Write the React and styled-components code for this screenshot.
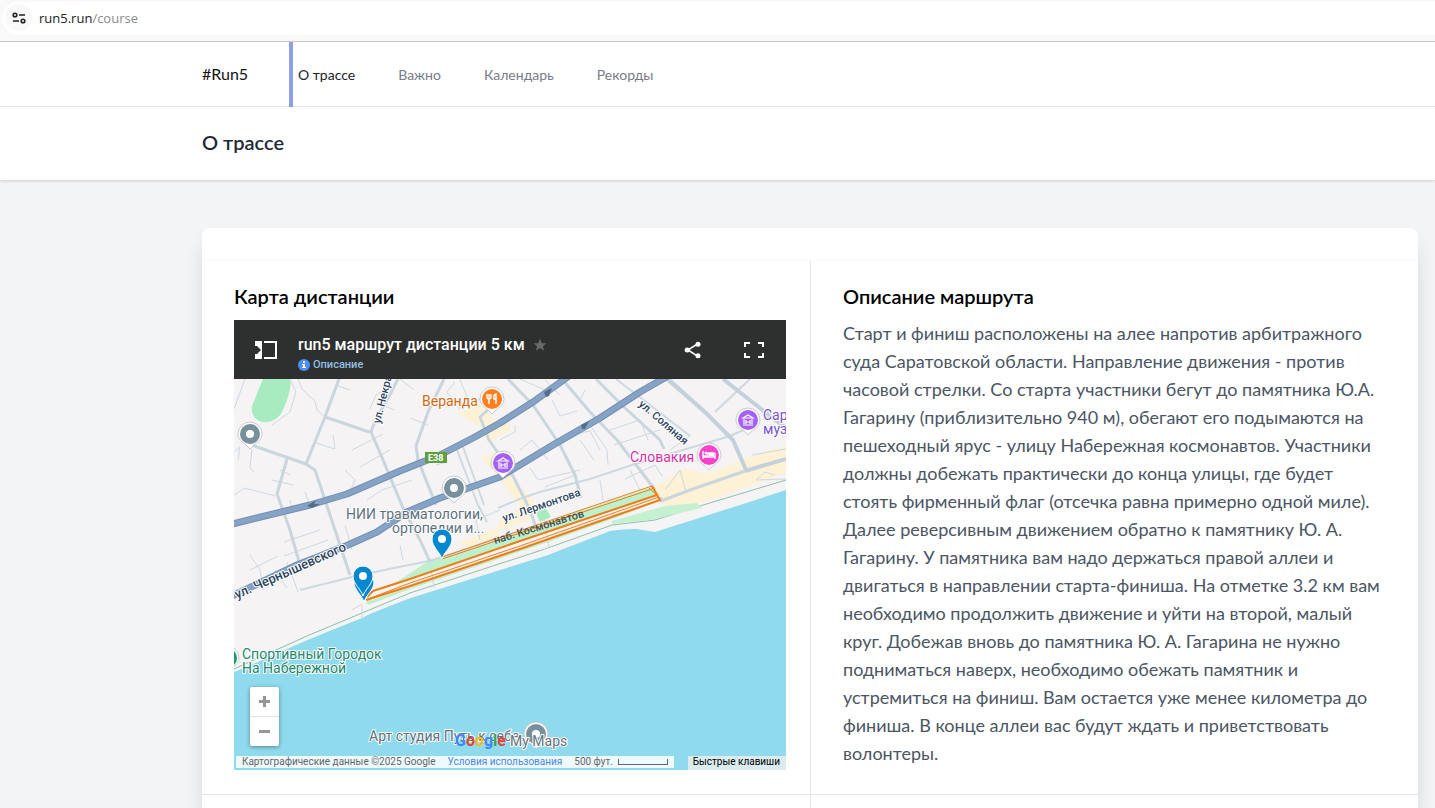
import React from "react";
import styled, { createGlobalStyle } from "styled-components";

const sans = `Lato, "Open Sans", "Noto Sans", sans-serif`;

const GlobalStyle = createGlobalStyle`
  * { box-sizing: border-box; }
  body { margin: 0; background: #f3f4f6; font-family: ${sans}; color: #000; }
  h1, h2, p { margin: 0; }
  button { font: inherit; border: 0; background: none; padding: 0; cursor: pointer; }
`;

const Page = styled.div`
  display: flex;
  flex-direction: column;
  min-height: 100vh;
`;

const BrowserBar = styled.div`
  display: flex;
  height: 42px;
  padding: 2px 0 6px 2px;
  background: #f9f9fa;
  border-bottom: 1px solid #c5c5c5;
`;

const Address = styled.div`
  flex: 1;
  display: flex;
  align-items: center;
  gap: 7px;
  padding: 0 0 2px 3px;
  background: #fff;
  border-radius: 17px 0 0 17px;
  color: #8a8a8a;
  font: 13px "Open Sans", "Noto Sans", sans-serif;
  b { font-weight: 400; color: #202124; }
`;

const SiteButton = styled.button`
  display: grid;
  place-items: center;
  width: 27px;
  height: 27px;
  border-radius: 50%;
  background: #f9f9fa !important;
`;

const Inset = styled.div`
  padding: 0 17px 0 202px;
`;

const NavBar = styled.nav`
  background: #fff;
  border-bottom: 1px solid #ecedf0;
`;

const NavRow = styled(Inset)`
  display: flex;
  align-items: stretch;
  gap: 30px;
  height: 64px;
`;

const Brand = styled.a`
  display: flex;
  align-items: center;
  width: 57px;
  padding-bottom: 2px;
  font-size: 16px;
  color: #111;
  text-decoration: none;
`;

const NavLink = styled.a`
  display: flex;
  align-items: center;
  padding: 1px 4px 0 5px;
  margin-bottom: -1px;
  border-left: 4px solid ${(p) => (p.$active ? "#8f9ee8" : "transparent")};
  color: ${(p) => (p.$active ? "#20242c" : "#777d88")};
  font-size: 14px;
  line-height: 20px;
  text-decoration: none;
`;

const TitleBar = styled.header`
  position: relative;
  background: #fff;
  box-shadow: 0 1px 3px rgba(0, 0, 0, 0.16);
`;

const PageTitle = styled.h1`
  padding: 23px 0 26px;
  font-size: 20px;
  line-height: 24px;
  font-weight: 600;
  color: #1f2937;
`;

const Main = styled(Inset)`
  flex: 1;
  display: flex;
  flex-direction: column;
  padding-top: 48px;
`;

const Card = styled.section`
  flex: 1;
  display: flex;
  flex-direction: column;
  padding-top: 32px;
  background: #fff;
  border-radius: 8px 8px 0 0;
  box-shadow: 0 20px 25px -5px rgba(0, 0, 0, 0.1), 0 10px 20px rgba(0, 0, 0, 0.05);
`;

const Columns = styled.div`
  display: grid;
  grid-template-columns: 1fr 1fr;
  border-top: 1px solid #fafafb;
`;

const Cell = styled.article`
  min-width: 0;
  padding: 24px 24px 24px 32px;
  border-bottom: 1px solid #e5e7eb;
  & + & { border-left: 1px solid #e5e7eb; }
`;

const NextRow = styled.div`
  flex: 1;
  display: grid;
  grid-template-columns: 1fr 1fr;
  min-height: 13px;
  span + span { border-left: 1px solid #e5e7eb; }
`;

const Heading = styled.h2`
  font-size: 20px;
  line-height: 22px;
  font-weight: 600;
  margin-bottom: 13px;
`;

const Prose = styled.p`
  margin: -1px 0 1px;
  font-size: 18px;
  line-height: 28px;
  color: #4b5563;
`;

const MapFrame = styled.div`
  display: flex;
  flex-direction: column;
  height: 450px;
  font-family: Roboto, sans-serif;
`;

const MapHeader = styled.div`
  display: flex;
  align-items: center;
  height: 59px;
  padding: 0 20px;
  background: #2e302f;
  color: #fff;
`;

const IconButton = styled.button`
  display: grid;
  place-items: center;
  width: 24px;
  height: 24px;
  margin-left: ${(p) => p.$gap || 0}px;
`;

const MapCaption = styled.div`
  flex: 1;
  margin-left: 20px;
  padding-top: 8px;
`;

const MapTitle = styled.div`
  display: flex;
  align-items: center;
  gap: 8px;
  font-size: 16px;
  line-height: 20px;
  font-weight: 500;
  white-space: nowrap;
`;

const MapInfo = styled.button`
  display: flex;
  align-items: center;
  gap: 3px;
  margin-top: 3px;
  color: #8fbfe6;
  font-size: 11px !important;
  line-height: 14px !important;
  font-weight: 500 !important;
`;

const MapBody = styled.div`
  position: relative;
  flex: 1;
  overflow: hidden;
  > svg { display: block; width: 100%; height: 100%; }
`;

const ZoomControl = styled.div`
  position: absolute;
  left: 16px;
  bottom: 24px;
  width: 29px;
  background: #fff;
  border-radius: 2px;
  box-shadow: 0 1px 4px rgba(0, 0, 0, 0.4);
`;

const ZoomButton = styled.button`
  display: grid;
  place-items: center;
  width: 29px;
  height: 29px;
  & + & { border-top: 1px solid #e2e2e2; height: 30px; }
`;

const MapFooter = styled.div`
  position: absolute;
  left: 2px;
  right: 0;
  bottom: 0;
  display: flex;
  justify-content: space-between;
  align-items: flex-start;
  height: 14px;
  font-size: 10px;
  line-height: 12px;
  white-space: nowrap;
`;

const Attribution = styled.div`
  display: flex;
  gap: 12px;
  padding: 0 6px;
  background: rgba(255, 255, 255, 0.85);
  color: #666;
  a { color: #4a86e8; text-decoration: none; }
`;

const Scale = styled.span`
  display: flex;
  align-items: center;
  gap: 5px;
`;

const ScaleBar = styled.i`
  width: 50px;
  height: 6px;
  border: 1px solid #666;
  border-top: 0;
`;

const KeysButton = styled.button`
  height: 14px;
  padding: 0 6px 2px 5px !important;
  background: #dbecf0 !important;
  color: #000;
`;

const streets = [
  "M339 379L325 417L306 464", "M325 417L343 423L366 431L371 432L381 455L403 508L420 540L430 562",
  "M250 444L257 447L306 464L315 470L329 512L350 575",
  "M287 459L277 494L290 530L300 565", "M371 432L375 421L386 402L398 379", "M444 379L428 412L416 446L418 460L436 505",
  "M493 405L480 417L489 440L510 470L530 510L537 530",
  "M508 379L533 405L560 445L575 475L581 498", "M562 379L590 412L617 440L640 470L655 490",
  "M596 379L625 408L660 440L664 449", "M745 471L690 490L661 501L661 497",
];
const avenues = [
  "M668 379L706 413L733 440L746 470", "M723 379L765 412L786 428", "M745 471L786 459",
];
const backStreets = [
  "M665 379L690 400", "M750 379L715 412", "M757 424L730 436L690 448L635 464L590 479L540 492",
  "M457 450L478 505L487 522", "M463 447L484 505", "M616 379L650 405L690 436",
  "M300 590L352 577", "M352 577L389 569L429 561L467 549L497 538", "M498 508L522 498L540 492",
];
const lanes = [
  "M298 379L302 389L315 401L317 410L325 417", "M335 385L350 390", "M316 443L335 449L333 435", "M352 450L383 434",
  "M360 467L390 450", "M345 470L355 480L350 492", "M367 500L382 490L412 480", "M370 482L390 473L403 468",
  "M272 480L293 485", "M280 470L290 475", "M234 495L245 488L275 496", "M252 449L250 468L254 472",
  "M234 409L245 379", "M378 403L394 410", "M410 418L428 425", "M370 409L376 395L384 390",
  "M305 492L311 509", "M290 500L293 512", "M250 555L260 570L263 590", "M284 542L320 530", "M284 556L328 540",
  "M345 525L352 550", "M287 562L298 592", "M275 570L287 588", "M436 465L447 462L443 455",
  "M552 400L560 416L577 411", "M520 379L550 392", "M570 435L590 431L600 450", "M580 440L594 460",
  "M610 430L640 420L648 440", "M614 445L660 430", "M590 425L607 450L608 465", "M625 479L655 465L662 476",
  "M640 490L630 470", "M600 480L603 500", "M575 475L545 487", "M530 468L538 480L580 470", "M520 450L532 440L548 460",
  "M500 440L515 432L515 425", "M560 395L545 380", "M585 390L580 400", "M480 540L476 520L500 510",
  "M670 450L690 436", "M752 455L786 449", "M665 490L680 470", "M686 492L680 470", "M716 480L740 474",
  "M786 479L756 480L765 472L775 475", "M400 545L403 560", "M455 560L462 548", "M250 570L278 556", "M383 400L392 392",
  "M400 379L414 390", "M455 382L447 392L460 410", "M460 380L470 403L483 398", "M290 379L296 392L290 412L272 425",
  "M234 452L240 447L238 460", "M362 605L362 619", "M430 562L434 588", "M352 610L362 604", "M544 520L549 547",
];

const Strokes = ({ paths, ...rest }) => (
  <g fill="none" strokeLinejoin="round" {...rest}>
    {paths.map((d) => <path key={d} d={d} />)}
  </g>
);

const highways = [
  "M228 525L310 505L347 494L400 471L440 455L473 438L500 423L533 402L569 376",
  "M228 598L297 565L348 545L377 532L407 512L440 498L500 477L553 445L600 418L640 392L668 376",
];

const Pin = ({ x, y, color, children }) => (
  <g transform={`translate(${x} ${y})`}>
    <path d="M-12 0A12 12 0 0 1 12 0C12 7 5 9 0 15C-5 9-12 7-12 0Z" fill="#fff" stroke="#b9bec4" strokeWidth="0.8" />
    <circle r="10" fill={color} />
    {children || <circle r="4" fill="#fff" />}
  </g>
);

const Museum = () => (
  <path d="M-5-2L0-5L5-2ZM-4-1V4M4-1V4M-5 5H5M-2 4V0M2 0V4M-2 2H2" fill="none" stroke="#fff" strokeWidth="1.2" />
);

const RouteMarker = ({ x, y, hollow = true }) => (
  <g transform={`translate(${x} ${y})`}>
    <path d="M0 16C-2 9-10 4-10-4A10 10 0 0 1 10-4C10 4 2 9 0 16Z" fill="#0288d1" stroke="#fff" strokeWidth="1" />
    {hollow && <circle cy="-4" r="4" fill="#fff" />}
  </g>
);

const Label = styled.text`
  font: ${(p) => p.$weight || 400} ${(p) => p.$size || 14}px Roboto, sans-serif;
  fill: ${(p) => p.$color};
  stroke: ${(p) => (p.$plain ? "none" : "#fff")};
  stroke-width: 2px;
  stroke-linejoin: round;
  paint-order: stroke;
`;

const CityMap = () => (
  <svg viewBox="234 379 552 391" preserveAspectRatio="xMidYMid slice" role="img" aria-label="Карта">
    <rect x="0" y="200" width="1200" height="800" fill="#f5f3f4" />
    <path d="M263 379H290C292 386 288 399 283 410C279 419 271 423 262 422C254 420 251 413 252 406Z" fill="#a8ebc1" />
    <g fill="#fdf1d6">
      <path d="M457 413L480 404L492 418L508 420L511 430L488 443L480 427Z" />
      <path d="M481 457L498 452L514 482L534 500L530 520L495 532L503 515L522 509L505 486Z" />
      <path d="M653 489L684 468L706 474L760 453L786 446V473L705 502L675 510L661 503Z" />
      <path d="M458 543L496 528L500 538L470 548Z" />
    </g>
    <path d="M234 672L307 640L362 618L377 610L410 598L545 556L610 531L630 528L655 532L677 525L740 505L786 490V1000H0V760Z" fill="#90daee" />
    <path d="M234 670L307 638L362 615L410 596L545 553L612 528L655 526L677 522L740 502L786 487" fill="none" stroke="#f3f5f4" strokeWidth="4" />
    <path d="M234 669L307 636L362 613L410 593L545 549L612 525L655 520L690 509L786 480" fill="none" stroke="#8dbfae" strokeWidth="1" />
    <path d="M366 602L427 562L652 487L660 501L612 519L545 543L410 589L368 605Z" fill="#bdf0cb" />
    <path d="M612 521L665 506L697 503L702 508L650 520L612 524Z" fill="#c4f1d0" />
    <path d="M535 511L545 507L551 517L540 522Z" fill="#a8ebc1" />
    <path d="M372 600L660 499L657 495L372 592Z" fill="#f5f3f4" />
    <path d="M543 550L556 546L558 551L545 556Z" fill="#f3f5f4" />
    <Strokes paths={lanes} stroke="#cdd9e0" strokeWidth="1" />
    <Strokes paths={backStreets} stroke="#cdd9e1" strokeWidth="2" />
    <Strokes paths={streets} stroke="#c9d6de" strokeWidth="3" />
    <Strokes paths={avenues} stroke="#c3d1da" strokeWidth="4" />
    <Strokes paths={highways} stroke="#7290b6" strokeWidth="7" />
    <Strokes paths={highways} stroke="#86a2c5" strokeWidth="5" />
    <g fill="#536d8d">
      <path d="M307 506L316 500L314 504L320 504L312 508Z" />
      <path d="M544 392L552 388L549 396L546 397Z" />
      <path d="M581 425L589 421L585 429L582 429Z" />
    </g>
    <g fill="none" stroke="#ef7d16">
      <path d="M442 557L652 486M442 559L652 489" strokeWidth="1" />
      <path d="M367 597L373 591L410 579L520 541L657 495" strokeWidth="2" />
      <path d="M366 600L410 586L520 549L620 514L660 500L652 486" strokeWidth="2" />
      <path d="M368 599L410 583L520 546L659 497L649 488" strokeWidth="1" />
    </g>
    <Label $color="#d5660d" x="422" y="406">Веранда</Label>
    <Label $color="#5d7180" x="346" y="519">НИИ травматологии,</Label>
    <Label $color="#5d7180" x="392" y="533">ортопедии и...</Label>
    <Label $color="#d430aa" x="630" y="462">Словакия</Label>
    <Label $color="#7951d2" x="763" y="420">Сар</Label>
    <Label $color="#7951d2" x="763" y="434">муз</Label>
    <Label $color="#22866b" x="242" y="659">Спортивный Городок</Label>
    <Label $color="#22866b" x="242" y="673">На Набережной</Label>
    <Label $color="#2c4460" $size={13} $weight={500} transform="translate(237 599) rotate(-24)">ул. Чернышевского</Label>
    <Label $color="#2c4460" $size={11} $weight={500} transform="translate(504 522) rotate(-19)">ул. Лермонтова</Label>
    <Label $color="#4b5050" $size={11} $weight={500} $plain transform="translate(495 544) rotate(-17)">наб. Космонавтов</Label>
    <Label $color="#2c4460" $size={11} $weight={500} transform="translate(638 405) rotate(41)">ул. Соляная</Label>
    <Label $color="#2c4460" $size={11} $weight={500} transform="translate(380 424) rotate(-76)">ул. Некра</Label>
    <rect x="425" y="452" width="22" height="11" fill="#5f9f3f" />
    <text x="428" y="461" fill="#fff" fontFamily="Roboto, sans-serif" fontSize="9" fontWeight="700">E38</text>
    <Pin x={250} y={434} color="#78909c" />
    <Pin x={454} y={488} color="#78909c" />
    <Pin x={492} y={399} color="#ff7f1f">
      <path d="M-5-5V-2Q-5 0-3 0V5M-3-5V0M-1-5V-2Q-1 0-3 0M4 5V-5Q1-4 2 0H4" fill="none" stroke="#fff" strokeWidth="1.4" />
    </Pin>
    <Pin x={503} y={463} color="#a561f5"><Museum /></Pin>
    <Pin x={748} y={420} color="#a561f5"><Museum /></Pin>
    <Pin x={709} y={455} color="#fb41cb">
      <path d="M-6-4V4M-6 2H6M6 4V-1Q6-2 4-2H-1V1H-6" fill="none" stroke="#fff" strokeWidth="1.4" />
      <circle cx="-3" cy="-2" r="1.5" fill="#fff" /><rect x="0" y="-2" width="5" height="3" fill="#fff" />
    </Pin>
    <Pin x={227} y={658} color="#179b6c" />
    <RouteMarker x={442} y={543} />
    <RouteMarker x={364} y={586} hollow={false} />
    <RouteMarker x={363} y={580} />
    <Label $color="#5d7180" x="369" y="741">Арт студия Путь к себе</Label>
    <Pin x={536} y={734} color="#78909c" />
    <text x="455" y="746" fontFamily="Roboto, sans-serif" fontSize="16" fontWeight="700">
      <tspan fill="#4285f4">G</tspan><tspan fill="#ea4335">o</tspan><tspan fill="#fbbc05">o</tspan><tspan fill="#4285f4">g</tspan><tspan fill="#34a853">l</tspan><tspan fill="#ea4335">e</tspan>
    </text>
    <Label $color="#697177" x="510" y="746">My Maps</Label>
  </svg>
);

const description = [
  "Старт и финиш расположены на алее напротив арбитражного",
  "суда Саратовской области. Направление движения - против",
  "часовой стрелки. Со старта участники бегут до памятника Ю.А.",
  "Гагарину (приблизительно 940 м), обегают его подымаются на",
  "пешеходный ярус - улицу Набережная космонавтов. Участники",
  "должны добежать практически до конца улицы, где будет",
  "стоять фирменный флаг (отсечка равна примерно одной миле).",
  "Далее реверсивным движением обратно к памятнику Ю. А.",
  "Гагарину. У памятника вам надо держаться правой аллеи и",
  "двигаться в направлении старта-финиша. На отметке 3.2 км вам",
  "необходимо продолжить движение и уйти на второй, малый",
  "круг. Добежав вновь до памятника Ю. А. Гагарина не нужно",
  "подниматься наверх, необходимо обежать памятник и",
  "устремиться на финиш. Вам остается уже менее километра до",
  "финиша. В конце аллеи вас будут ждать и приветствовать",
  "волонтеры.",
];

export default function App() {
  return (
    <Page>
      <GlobalStyle />
      <BrowserBar>
        <Address>
          <SiteButton aria-label="Сведения о сайте">
            <svg width="14" height="14" viewBox="0 0 14 14" fill="none" stroke="#202124" strokeWidth="1.6">
              <circle cx="3" cy="4" r="1.8" /><path d="M7 4H13M1 10H7" /><circle cx="11" cy="10" r="1.8" />
            </svg>
          </SiteButton>
          <div><b>run5.run</b>/course</div>
        </Address>
      </BrowserBar>
      <NavBar>
        <NavRow>
          <Brand href="#">#Run5</Brand>
          <NavLink href="#course" $active>О трассе</NavLink>
          <NavLink href="#important">Важно</NavLink>
          <NavLink href="#calendar">Календарь</NavLink>
          <NavLink href="#records">Рекорды</NavLink>
        </NavRow>
      </NavBar>
      <TitleBar>
        <Inset><PageTitle>О трассе</PageTitle></Inset>
      </TitleBar>
      <Main as="main">
        <Card>
          <Columns>
            <Cell>
              <Heading>Карта дистанции</Heading>
              <MapFrame>
                <MapHeader>
                  <IconButton aria-label="Показать легенду">
                    <svg width="24" height="24" viewBox="0 0 24 24">
                      <path d="M1 3H8V21H1Z" fill="#fff" />
                      <path d="M1 8H3V11H1ZM1 13H3V16H1ZM1 11H3V8L7 12L3 16V13H1Z" fill="#2e302f" />
                      <path d="M10 4H22V20H10" fill="none" stroke="#fff" strokeWidth="2" />
                    </svg>
                  </IconButton>
                  <MapCaption>
                    <MapTitle>
                      run5 маршрут дистанции 5 км
                      <svg width="14" height="14" viewBox="0 0 24 24" fill="#686a69"><path d="M12 1L15 9H23L17 14L19 22L12 17L5 22L7 14L1 9H9Z" /></svg>
                    </MapTitle>
                    <MapInfo>
                      <svg width="12" height="12" viewBox="0 0 12 12">
                        <circle cx="6" cy="6" r="6" fill="#4d8df6" />
                        <path d="M5 2H7V4H5ZM4 5H7V8H8V9H4V8H5V6H4Z" fill="#fff" />
                      </svg>
                      Описание
                    </MapInfo>
                  </MapCaption>
                  <IconButton aria-label="Поделиться">
                    <svg width="20" height="20" viewBox="0 0 24 24" fill="#fff">
                      <path d="M17 5L6 12L17 19" fill="none" stroke="#fff" strokeWidth="2" />
                      <circle cx="18" cy="5" r="3" /><circle cx="5" cy="12" r="3" /><circle cx="18" cy="19" r="3" />
                    </svg>
                  </IconButton>
                  <IconButton aria-label="Во весь экран" $gap={37}>
                    <svg width="20" height="16" viewBox="0 0 20 16" fill="none" stroke="#fff" strokeWidth="2">
                      <path d="M1 5V1H6M14 1H19V5M19 11V15H14M6 15H1V11" />
                    </svg>
                  </IconButton>
                </MapHeader>
                <MapBody>
                  <CityMap />
                  <ZoomControl>
                    <ZoomButton aria-label="Увеличить">
                      <svg width="11" height="11" viewBox="0 0 11 11"><path d="M4 0H7V4H11V7H7V11H4V7H0V4H4Z" fill="#969696" /></svg>
                    </ZoomButton>
                    <ZoomButton aria-label="Уменьшить">
                      <svg width="11" height="3" viewBox="0 0 11 3"><path d="M0 0H11V3H0Z" fill="#969696" /></svg>
                    </ZoomButton>
                  </ZoomControl>
                  <MapFooter>
                    <Attribution>
                      <span>Картографические данные ©2025 Google</span>
                      <a href="#terms">Условия использования</a>
                      <Scale>500 фут. <ScaleBar /></Scale>
                    </Attribution>
                    <KeysButton>Быстрые клавиши</KeysButton>
                  </MapFooter>
                </MapBody>
              </MapFrame>
            </Cell>
            <Cell>
              <Heading>Описание маршрута</Heading>
              <Prose>
                {description.map((line) => (
                  <React.Fragment key={line}>{line}<br /></React.Fragment>
                ))}
              </Prose>
            </Cell>
          </Columns>
          <NextRow><span /><span /></NextRow>
        </Card>
      </Main>
    </Page>
  );
}
